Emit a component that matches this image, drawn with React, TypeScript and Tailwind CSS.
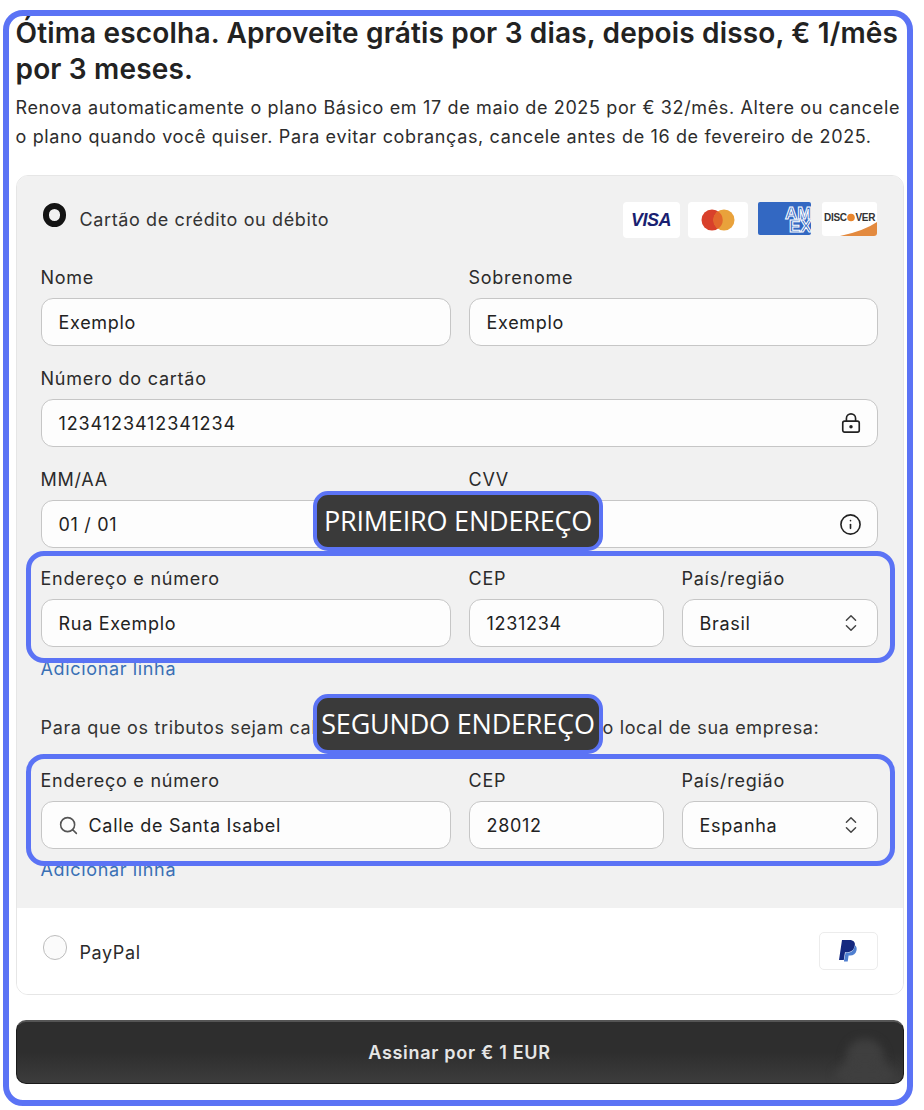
import React from "react";
import { LockKeyhole, Info, ChevronsUpDown, Search } from "lucide-react";

function Field({ label, value, children, left, wide }: { label: string; value: string; children?: React.ReactNode; left?: React.ReactNode; wide?: boolean }) {
  return (
    <div className="min-w-0">
      <div className="h-[21px] mb-[10px] text-[18px] leading-[21px] tracking-[0.75px] text-[#2b2b2b]">{label}</div>
      <div className={`h-[48px] rounded-[12px] border border-[#c6c6c6] bg-[#fdfdfd] pl-[17px] pr-[15px] flex items-center justify-between text-[18px] text-[#222] ${wide ? "tracking-[0.9px]" : "tracking-[0.7px]"}`}>
        <div className="flex items-center gap-[10px]">
          {left}
          <span>{value}</span>
        </div>
        {children}
      </div>
    </div>
  );
}

function AddressRow({ country, street, cep, search }: { country: string; street: string; cep: string; search?: boolean }) {
  return (
    <div className="grid grid-cols-[410px_195px_196px] gap-x-[18px]">
      <Field label="Endereço e número" value={street} left={search ? <Search size={21} strokeWidth={1.8} className="text-[#555] -ml-[1px]" /> : undefined} />
      <Field label="CEP" value={cep} />
      <Field label="País/região" value={country}>
        <ChevronsUpDown size={22} strokeWidth={1.6} className="text-[#444]" />
      </Field>
    </div>
  );
}

function Highlight({ top }: { top: string }) {
  return <div className={`absolute left-[26px] w-[869px] h-[112px] rounded-[18px] border-[5px] border-[#5b73f5] pointer-events-none ${top}`} />;
}

function Badge({ text, top }: { text: string; top: string }) {
  return (
    <div
      className={`absolute left-[313px] w-[290px] h-[60px] rounded-[15px] border-[4px] border-[#5b73f5] bg-[#3a3a3a] text-white flex items-center justify-center whitespace-nowrap text-[27px] tracking-[-0.2px] font-['Open_Sans',sans-serif] ${top}`}
    >
      {text}
    </div>
  );
}

function Visa() {
  return (
    <div className="w-[57px] h-[36px] rounded-[4px] bg-white flex items-center justify-center">
      <span className="text-[#1a1f71] text-[18px] font-extrabold italic tracking-[-0.5px] font-['Liberation_Sans',sans-serif]">VISA</span>
    </div>
  );
}

function Master() {
  return (
    <div className="w-[60px] h-[36px] rounded-[4px] bg-white flex items-center justify-center">
      <svg width="34" height="22" viewBox="0 0 34 22">
        <circle cx="11" cy="11" r="10.5" fill="#d8402b" />
        <circle cx="23" cy="11" r="10.5" fill="#e9a23b" />
        <path d="M17 2.2a10.5 10.5 0 0 1 0 17.6a10.5 10.5 0 0 1 0-17.6z" fill="#e2672c" />
      </svg>
    </div>
  );
}

function Amex() {
  return (
    <div className="w-[53px] h-[33px] rounded-[2px] bg-[#3368c2] overflow-hidden">
      <svg width="53" height="33" viewBox="0 0 53 33">
        <text x="27" y="17" fontSize="17" fontWeight="700" fontFamily="Liberation Sans, sans-serif" fill="#3368c2" stroke="#fff" strokeWidth="1">AM</text>
        <text x="31" y="30" fontSize="17" fontWeight="700" fontFamily="Liberation Sans, sans-serif" fill="#3368c2" stroke="#fff" strokeWidth="1">EX</text>
      </svg>
    </div>
  );
}

function Discover() {
  return (
    <div className="w-[55px] h-[34px] rounded-[3px] bg-white overflow-hidden">
      <svg width="55" height="34" viewBox="0 0 55 34">
        <path d="M18 34Q42 29 55 20V34z" fill="#e38a3f" />
        <text x="2" y="19" fontSize="10" fontWeight="700" letterSpacing="-0.3" fontFamily="Liberation Sans, sans-serif" fill="#333">DISC</text>
        <circle cx="29" cy="15.5" r="3.8" fill="#e8862e" />
        <text x="33.5" y="19" fontSize="10" fontWeight="700" letterSpacing="-0.3" fontFamily="Liberation Sans, sans-serif" fill="#333">VER</text>
      </svg>
    </div>
  );
}

function PayPal() {
  return (
    <div className="w-[59px] h-[38px] mr-[1px] rounded-[5px] bg-white border border-[#ececec] flex items-center justify-center">
      <svg width="18" height="22" viewBox="0 0 18 22">
        <path d="M3 0h7.5C14.5 0 16.5 2.2 15.8 5.8 15 10.2 12 12.2 8.5 12.2H6L4.8 20H0z" fill="#14287f" />
        <path d="M15.9 5.2C17.6 6.4 18 8.2 17.5 10.4 16.7 13.6 14.4 15.4 11.2 15.4H9.6L8.7 21.5H4.9L5.4 18.5 6.6 12.6H8.6C12.2 12.6 15.2 10.2 15.9 5.2z" fill="#4f7fd0" />
      </svg>
    </div>
  );
}

export default function App() {
  return (
    <div className="w-[924px] h-[1110px] bg-white pt-[10px] pl-[3px] font-['Inter',sans-serif] relative overflow-hidden">
      <div className="w-[910px] h-[1096px] rounded-[20px] border-[6.5px] border-[#5b73f5] pl-[6.5px] pr-[3.5px] overflow-hidden">
        <h1 className="mt-[-1px] text-[28px] leading-[36px] tracking-[0.17px] font-semibold text-[#222]">
          Ótima escolha. Aproveite grátis por 3 dias, depois disso, € 1/mês por 3 meses.
        </h1>
        <p className="mt-[6px] text-[18px] leading-[29px] tracking-[0.64px] text-[#2d2d2d]">
          Renova automaticamente o plano Básico em 17 de maio de 2025 por € 32/mês. Altere ou cancele o plano quando você quiser. Para evitar cobranças, cancele antes de 16 de fevereiro de 2025.
        </p>

        <div className="mt-[24px] rounded-[12px] border border-[#e6e6e6] overflow-hidden">
          <div className="bg-[#f1f1f1] px-[24px] h-[732px]">
            <div className="h-[91px] flex pt-[27px] justify-between">
              <div className="flex">
                <div className="ml-[2px] w-[23px] h-[24px] rounded-full border-[6px] border-[#141414] bg-[#f1f1f1]" />
                <span className="ml-[14px] mt-[6px] text-[18px] leading-[22px] tracking-[0.62px] text-[#333]">Cartão de crédito ou débito</span>
              </div>
              <div className="flex gap-[8px] items-start mr-[2px] -mt-[1px]">
                <Visa />
                <Master />
                <div className="ml-[2px] mr-[3px]"><Amex /></div>
                <Discover />
              </div>
            </div>
            <div className="grid grid-cols-[410px_409px] gap-x-[18px] gap-y-[22px]">
              <Field label="Nome" value="Exemplo" />
              <Field label="Sobrenome" value="Exemplo" />
              <div className="col-span-2">
                <Field label="Número do cartão" value="1234123412341234" wide>
                  <LockKeyhole size={22} strokeWidth={1.8} className="text-[#222]" />
                </Field>
              </div>
              <Field label="MM/AA" value="01 / 01" />
              <Field label="CVV" value="">
                <Info size={23} strokeWidth={1.7} className="text-[#222]" />
              </Field>
            </div>
            <div className="mt-[20px]">
              <AddressRow street="Rua Exemplo" cep="1231234" country="Brasil" />
            </div>
            <div className="mt-[11px] h-[22px] text-[18px] leading-[22px] tracking-[0.65px] text-[#3a70b5]">Adicionar linha</div>
            <div className="mt-[37px] h-[22px] text-[18px] leading-[22px] tracking-[0.65px] whitespace-nowrap text-[#333]">
              Para que os tributos sejam calculados corretamente, informe o local de sua empresa:
            </div>
            <div className="mt-[31px]">
              <AddressRow street="Calle de Santa Isabel" cep="28012" country="Espanha" search />
            </div>
            <div className="mt-[10px] h-[22px] text-[18px] leading-[22px] tracking-[0.65px] text-[#3a70b5]">Adicionar linha</div>
          </div>
          <div className="bg-white h-[86px] px-[24px] flex justify-between items-start pt-[24px]">
            <div className="flex">
              <div className="ml-[2px] mt-[3px] w-[24px] h-[25px] rounded-full border border-[#bdbdbd] bg-[#fbfbfb]" />
              <span className="ml-[13px] mt-[8px] text-[18px] leading-[26px] tracking-[0.6px] text-[#2b2b2b]">PayPal</span>
            </div>
            <PayPal />
          </div>
        </div>

        <div className="relative overflow-hidden mt-[25px] h-[64px] rounded-[10px] bg-gradient-to-b from-[#2e2e2e] via-[#2e2e2e] to-[#3d3d3d] border border-[#1a1a1a] border-t-2 border-t-[#555] flex items-center justify-center text-[18px] tracking-[0.7px] font-semibold text-[#e6e6e6]">
          Assinar por € 1 EUR
          <div className="absolute right-[18px] bottom-[-6px] w-[40px] h-[50px] rounded-[45%] bg-[#3f3f3f] blur-[4px]" />
          <div className="absolute right-[8px] bottom-[-4px] w-[60px] h-[24px] rounded-[45%] bg-[#3f3f3f] blur-[4px]" />
        </div>
      </div>

      <Highlight top="top-[551px]" />
      <Highlight top="top-[754px]" />
      <Badge text="PRIMEIRO ENDEREÇO" top="top-[491px]" />
      <Badge text="SEGUNDO ENDEREÇO" top="top-[694px]" />
    </div>
  );
}
